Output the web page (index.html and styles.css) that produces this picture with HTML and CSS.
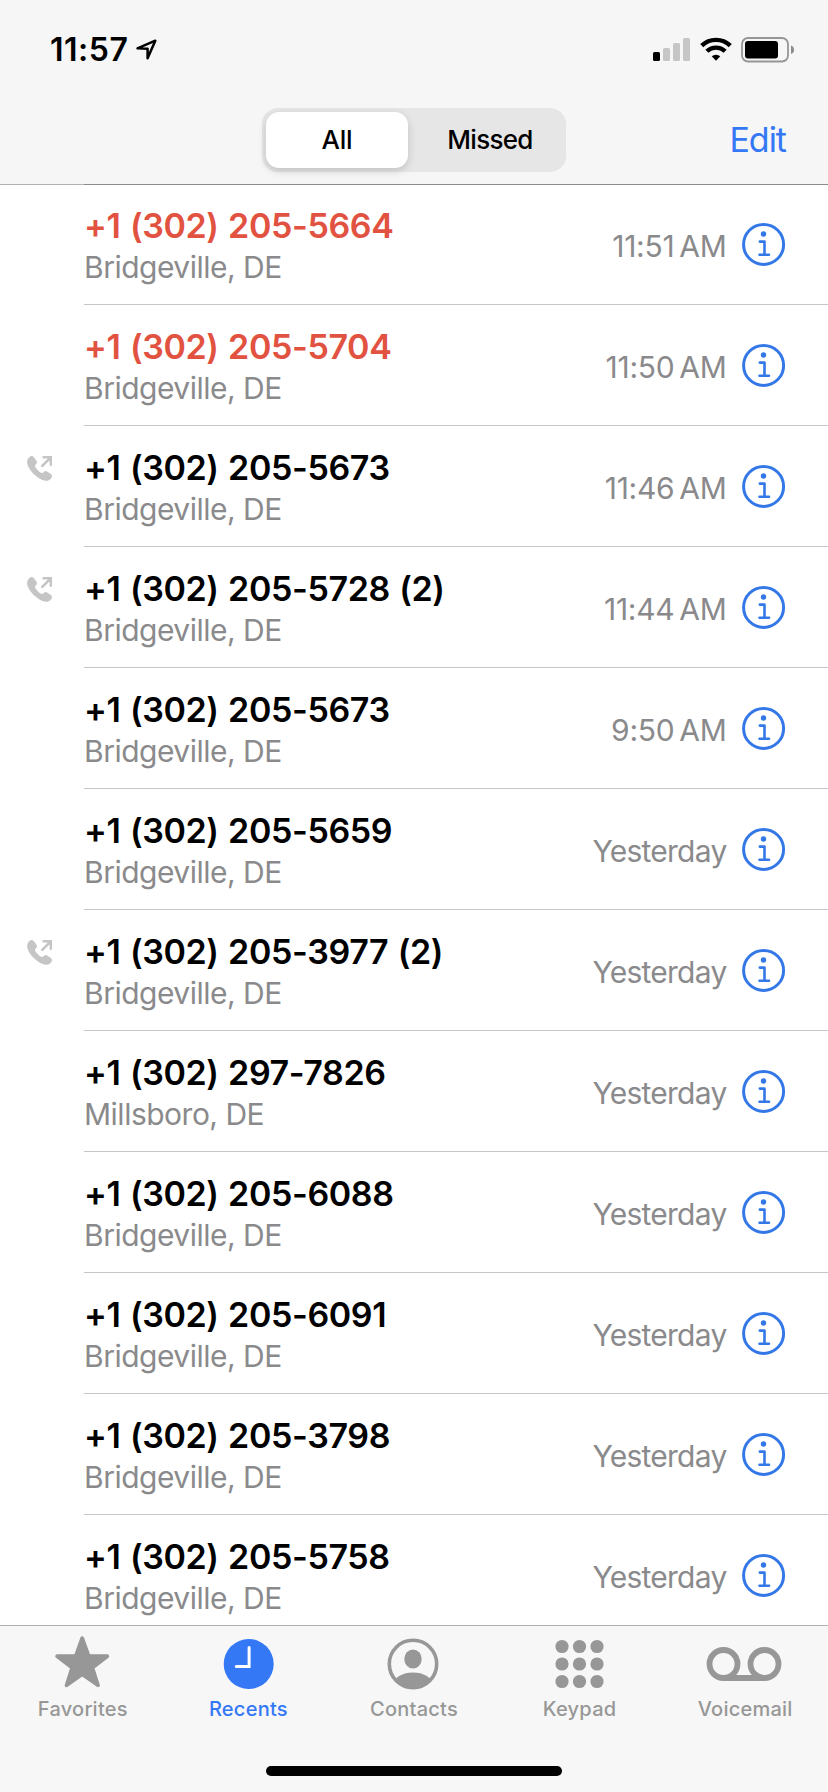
FILE: index.html
```html
<!DOCTYPE html>
<html lang="en">
<head>
<meta charset="utf-8">
<title>Recents</title>
<link rel="stylesheet" href="styles.css">
</head>
<body>
<svg class="defs" width="0" height="0" aria-hidden="true">
  <symbol id="info" viewBox="0 0 44 44">
    <circle cx="21.600" cy="22.400" r="20" fill="none" stroke="currentColor" stroke-width="3"/>
    <circle cx="21.500" cy="12" r="2.700" fill="currentColor"/>
    <path d="M17.800 19.600H22.500V32.700M17.500 32.800H27" fill="none" stroke="currentColor" stroke-width="2.600" stroke-linecap="round" stroke-linejoin="round"/>
  </symbol>
  <symbol id="outgoing" viewBox="0 0 25 25">
    <path d="M2.300 1.200C3.600-.2 5.700-.3 6.900 1.200L9.300 4.600C10.300 6 10.100 7.200 9.100 8.200L8.300 9.100C7.800 9.700 7.900 10.200 8.300 10.900C9.700 13.200 11.800 15.300 14.200 16.800C14.900 17.200 15.400 17.200 15.900 16.700L16.800 15.900C17.900 14.900 19.100 14.800 20.400 15.700L23.900 18.100C25.300 19.200 25.300 21.100 24 22.500C21.800 25 18.700 25.600 14.900 23.700C8.500 20.600 3.300 15.200 1 10C-.5 6.400 0 3.500 2.300 1.200Z" fill="currentColor"/>
    <path d="M15.300 9.800L23.500 1.600M16.600 1.300H23.900V8.800" fill="none" stroke="currentColor" stroke-width="2.600" stroke-linecap="round"/>
  </symbol>
</svg>
<div class="screen">
  <header class="header">
    <div class="status">
      <div class="clock"><span class="clock-text">11:57</span>
        <svg class="location" width="22" height="22" viewBox="0 0 22 22"><path d="M1.500 9.300L19.300 1.700L11.600 19.300V9.700Z" fill="none" stroke="#000" stroke-width="2.500" stroke-linejoin="round"/></svg>
      </div>
      <div class="indicators">
        <svg class="signal" width="38" height="24" viewBox="0 0 38 24"><rect x="0" y="14" width="7" height="9" rx="1.500"/><g fill="#c6c6c6"><rect x="10" y="10" width="7" height="13" rx="1.500"/><rect x="20" y="5" width="7" height="18" rx="1.500"/><rect x="30" y="0" width="7" height="23" rx="1.500"/></g></svg>
        <svg class="wifi" width="32" height="24" viewBox="0 0 32 24"><g fill="none" stroke="#000" stroke-width="4.400"><path d="M1.700 8.700A20.500 20.500 0 0 1 30.300 8.700"/><path d="M6.900 14.300A13 13 0 0 1 25.100 14.300"/></g><path d="M11.700 19.300A6.500 6.500 0 0 1 20.300 19.300L16 23.700Z"/></svg>
        <svg width="54" height="26" viewBox="0 0 54 26"><rect x="1" y="1" width="46" height="23.500" rx="6" fill="none" stroke="#969696" stroke-width="1.800"/><rect x="4" y="4" width="33" height="17.500" rx="3"/><path d="M50 8.500Q53 9.500 53 12.700T50 17Z" fill="#8a8a8a"/></svg>
      </div>
    </div>
    <div class="nav">
      <div class="segments"><div class="segment selected">All</div><div class="segment">Missed</div></div>
      <div class="edit">Edit</div>
    </div>
  </header>
  <main class="list">
    <div class="row"><div class="kind"></div><div class="cell"><div class="caller"><div class="number missed">+1 (302) 205-5664</div><div class="place">Bridgeville, DE</div></div><div class="time">11:51<i></i>AM</div><svg class="info"><use href="#info"/></svg></div></div>
    <div class="row"><div class="kind"></div><div class="cell"><div class="caller"><div class="number missed">+1 (302) 205-5704</div><div class="place">Bridgeville, DE</div></div><div class="time">11:50<i></i>AM</div><svg class="info"><use href="#info"/></svg></div></div>
    <div class="row"><div class="kind"><svg><use href="#outgoing"/></svg></div><div class="cell"><div class="caller"><div class="number">+1 (302) 205-5673</div><div class="place">Bridgeville, DE</div></div><div class="time">11:46<i></i>AM</div><svg class="info"><use href="#info"/></svg></div></div>
    <div class="row"><div class="kind"><svg><use href="#outgoing"/></svg></div><div class="cell"><div class="caller"><div class="number">+1 (302) 205-5728 (2)</div><div class="place">Bridgeville, DE</div></div><div class="time">11:44<i></i>AM</div><svg class="info"><use href="#info"/></svg></div></div>
    <div class="row"><div class="kind"></div><div class="cell"><div class="caller"><div class="number">+1 (302) 205-5673</div><div class="place">Bridgeville, DE</div></div><div class="time">9:50<i></i>AM</div><svg class="info"><use href="#info"/></svg></div></div>
    <div class="row"><div class="kind"></div><div class="cell"><div class="caller"><div class="number">+1 (302) 205-5659</div><div class="place">Bridgeville, DE</div></div><div class="time day">Yesterday</div><svg class="info"><use href="#info"/></svg></div></div>
    <div class="row"><div class="kind"><svg><use href="#outgoing"/></svg></div><div class="cell"><div class="caller"><div class="number">+1 (302) 205-3977 (2)</div><div class="place">Bridgeville, DE</div></div><div class="time day">Yesterday</div><svg class="info"><use href="#info"/></svg></div></div>
    <div class="row"><div class="kind"></div><div class="cell"><div class="caller"><div class="number">+1 (302) 297-7826</div><div class="place">Millsboro, DE</div></div><div class="time day">Yesterday</div><svg class="info"><use href="#info"/></svg></div></div>
    <div class="row"><div class="kind"></div><div class="cell"><div class="caller"><div class="number">+1 (302) 205-6088</div><div class="place">Bridgeville, DE</div></div><div class="time day">Yesterday</div><svg class="info"><use href="#info"/></svg></div></div>
    <div class="row"><div class="kind"></div><div class="cell"><div class="caller"><div class="number">+1 (302) 205-6091</div><div class="place">Bridgeville, DE</div></div><div class="time day">Yesterday</div><svg class="info"><use href="#info"/></svg></div></div>
    <div class="row"><div class="kind"></div><div class="cell"><div class="caller"><div class="number">+1 (302) 205-3798</div><div class="place">Bridgeville, DE</div></div><div class="time day">Yesterday</div><svg class="info"><use href="#info"/></svg></div></div>
    <div class="row"><div class="kind"></div><div class="cell"><div class="caller"><div class="number">+1 (302) 205-5758</div><div class="place">Bridgeville, DE</div></div><div class="time day">Yesterday</div><svg class="info"><use href="#info"/></svg></div></div>
  </main>
  <footer class="footer">
    <nav class="tabs">
      <div class="tab"><svg width="56" height="56" viewBox="0 0 56 56"><path d="M27.200 3.200L33.600 20.900L52.300 21.200L37.300 32.700L43 50.300L27.200 39.300L11.600 50.300L17.200 32.700L2.200 21.200L20.900 20.900Z" fill="currentColor" stroke="currentColor" stroke-width="3.800" stroke-linejoin="round"/></svg><span>Favorites</span></div>
      <div class="tab active"><svg width="56" height="56" viewBox="0 0 56 56"><circle cx="28.700" cy="29" r="25" fill="currentColor"/><path d="M29.100 12.500V31.500H16.300" fill="none" stroke="#fff" stroke-width="3" stroke-linecap="round"/></svg><span>Recents</span></div>
      <div class="tab"><svg width="56" height="56" viewBox="0 0 56 56"><clipPath id="face"><circle cx="27" cy="29" r="24"/></clipPath><circle cx="27" cy="29" r="23.700" fill="none" stroke="currentColor" stroke-width="3.600"/><ellipse cx="27" cy="24" rx="8.700" ry="9.500" fill="currentColor"/><ellipse cx="27" cy="49" rx="19" ry="11.500" fill="currentColor" clip-path="url(#face)"/></svg><span>Contacts</span></div>
      <div class="tab"><svg width="56" height="56" viewBox="0 0 56 56"><g fill="currentColor"><circle cx="10" cy="11.500" r="6.600"/><circle cx="27.500" cy="11.500" r="6.600"/><circle cx="45" cy="11.500" r="6.600"/><circle cx="10" cy="29" r="6.600"/><circle cx="27.500" cy="29" r="6.600"/><circle cx="45" cy="29" r="6.600"/><circle cx="10" cy="46.500" r="6.600"/><circle cx="27.500" cy="46.500" r="6.600"/><circle cx="45" cy="46.500" r="6.600"/></g></svg><span>Keypad</span></div>
      <div class="tab"><svg width="78" height="56" viewBox="0 0 78 56"><g fill="none" stroke="currentColor" stroke-width="5.800"><circle cx="17.500" cy="29" r="14"/><circle cx="58.500" cy="29" r="14"/><path d="M17.500 43H58.500"/></g></svg><span>Voicemail</span></div>
    </nav>
    <div class="home"></div>
  </footer>
</div>
</body>
</html>
```
FILE: styles.css
```css
* { box-sizing: border-box; }
body { margin: 0; background: #fff; font-family: Inter, "Liberation Sans", sans-serif; color: #000; }
.defs { display: block; height: 0; }
.screen { width: 828px; height: 1792px; display: flex; flex-direction: column; overflow: hidden; }
.header { height: 185px; flex: none; background: linear-gradient(90deg, #b2b2b2 84px, #8c8c8c 84px) bottom / 100% 1px no-repeat #f6f6f6; }
.status { height: 108px; padding: 30px 33px 0 50px; display: flex; justify-content: space-between; align-items: flex-start; }
.clock { display: flex; align-items: center; gap: 8px; height: 40px; font-size: 32px; font-weight: 600; line-height: 40px; letter-spacing: .5px; }
.indicators { display: flex; padding-top: 7px; align-items: flex-start; }
.signal { margin: 1px 8.5px 0 0; }
.wifi { margin-right: 9.5px; }
.nav { height: 64px; display: grid; grid-template-columns: 262px 304px 1fr; align-items: center; }
.segments { grid-column: 2; height: 64px; padding: 4px; display: grid; grid-template-columns: 142px 1fr; background: #e6e6e6; border-radius: 16px; }
.segment { display: flex; align-items: center; justify-content: center; font-size: 26px; font-weight: 500; padding: 0 0 1px 10px; letter-spacing: -.7px; }
.segment.selected { background: #fff; border-radius: 13px; padding: 0 0 1px; letter-spacing: -.2px; box-shadow: 0 3px 8px rgba(0, 0, 0, .16); }
.edit { justify-self: end; padding-right: 42px; color: #3478f6; font-size: 34px; line-height: 40px; letter-spacing: -1px; }
.list { height: 1440px; flex: none; overflow: hidden; }
.row { height: 121px; display: flex; }
.row:first-child { height: 120px; }
.row:first-child .cell { padding-top: 19px; }
.kind { width: 84px; flex: none; padding: 30px 0 0 27px; color: #c5c5c6; }
.kind svg { display: block; width: 25px; height: 25px; }
.cell { flex: 1; display: flex; align-items: flex-start; border-bottom: 1px solid #c6c6c8; padding: 20px 42px 0 0; }
.caller { flex: 1; }
.number { font-size: 34px; font-weight: 600; line-height: 44px; white-space: nowrap; letter-spacing: -.37px; word-spacing: 1.2px; }
.number.missed { color: #e25241; }
.place { font-size: 30px; line-height: 38px; color: #8a8a8c; letter-spacing: -.5px; }
.time { font-size: 30px; line-height: 38px; color: #8a8a8c; margin: 23px 15.500px 0 0; white-space: nowrap; letter-spacing: -.3px; }
.time.day { letter-spacing: -.75px; }
.time i { display: inline-block; width: 5px; }
.info { width: 44px; height: 44px; color: #3478e8; margin-top: 18px; }
.footer { height: 167px; flex: none; border-top: 1px solid #b2b2b2; background: #f7f7f7; display: flex; flex-direction: column; align-items: center; }
.tabs { width: 100%; height: 140px; display: grid; grid-template-columns: repeat(5, 1fr); }
.tab { display: flex; flex-direction: column; align-items: center; padding-top: 9px; color: #979797; }
.tab svg { display: block; }
.tab span { font-size: 20px; font-weight: 500; line-height: 24px; margin-top: 6px; letter-spacing: .25px; }
.tab.active { color: #3478f6; }
.home { width: 296px; height: 10px; border-radius: 5px; background: #000; }
```
